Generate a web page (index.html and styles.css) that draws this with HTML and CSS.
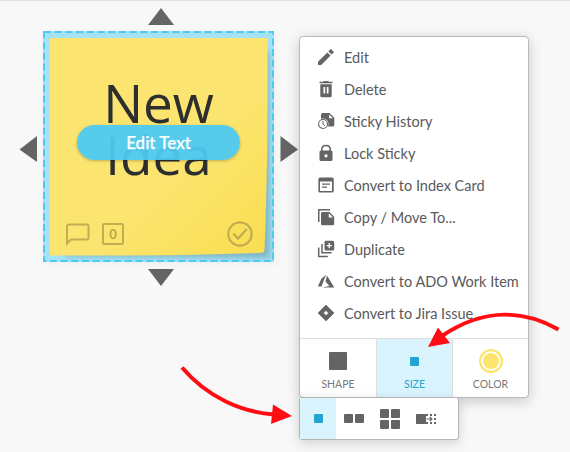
FILE: index.html
```html
<!DOCTYPE html>
<html lang="en">
<head>
<meta charset="utf-8">
<title>Sticky menu</title>
<link rel="stylesheet" href="styles.css">
</head>
<body>
<main class="canvas">
  <section class="sticky">
    <svg class="paper" width="231" height="231" viewBox="0 0 231 231">
      <defs>
        <linearGradient id="note" x1="0" y1="0" x2="1" y2="1">
          <stop offset="0.58" stop-color="#fbe570"/><stop offset="1" stop-color="#fadd4f"/>
        </linearGradient>
        <filter id="soft" x="-10%" y="-10%" width="120%" height="120%"><feGaussianBlur stdDeviation="3"/></filter>
        <clipPath id="frameClip"><rect width="231" height="231"/></clipPath>
      </defs>
      <rect width="231" height="231" fill="#a3e2f7"/>
      <path clip-path="url(#frameClip)" filter="url(#soft)" d="M20 20H226L227 227L22 225Z" fill="#4d7580" opacity=".42"/>
      <path d="M0 0H231V7H0ZM0 0H7V231H0Z" fill="#a3e2f7"/>
      <path d="M7 7H224.5C225 90 224 160 221.5 219Q221.500 221.500 219 221.800Q150 225 7 224.500Z" fill="url(#note)"/>
      <rect x="1" y="1" width="229" height="229" fill="none" stroke="#50c9ef" stroke-width="2" stroke-dasharray="7 3.700" stroke-dashoffset="0"/>
    </svg>
    <div class="note-text">New<br>Idea</div>
    <div class="edit-text">Edit Text</div>
    <div class="note-tools">
      <svg width="24" height="23" viewBox="0 0 24 23"><path d="M3.500 1.500H20.500Q22.500 1.500 22.500 3.500V14.500Q22.500 16.500 20.500 16.500H5L1 20.500V3.500Q1 1.500 3.500 1.500Z" fill="none" stroke="#c1ae50" stroke-width="2"/></svg>
      <span class="votes">0</span>
      <svg class="done" width="26" height="26" viewBox="0 0 26 26" fill="none" stroke="#c1ae50"><circle cx="13" cy="13" r="11.700" stroke-width="2.200"/><path d="M7 13.300L11 17.500L19.200 8.800" stroke-width="2.300" stroke-linecap="round"/></svg>
    </div>
  </section>
  <svg class="handles" width="300" height="300" viewBox="0 0 300 300" fill="#626466">
    <path d="M161 8L174 25H148ZM161 286L174 269H148ZM19.500 149.500L37 136V162ZM298 149.500L280.500 136V162Z"/>
  </svg>

  <nav class="menu">
    <ul class="items">
      <li><svg viewBox="0 0 16 16"><path d="M0 12.800V16H3.200L12.600 6.600L9.400 3.400ZM15.400 3.800Q16 3.100 15.400 2.500L13.500 .6Q12.900 0 12.200 .6L10.400 2.400L13.600 5.600Z"/></svg><span class="w1">Edit</span></li>
      <li><svg viewBox="0 0 16 16"><path d="M1.500 .8H5L6 0H10L11 .8H14.500V2.300H1.500ZM2.300 3.300H13.700V14.700Q13.700 16.300 12.200 16.300H3.800Q2.300 16.300 2.300 14.700ZM5.500 6V12.500H7.200V6ZM8.800 6V12.500H10.500V6Z" fill-rule="evenodd"/></svg><span class="w2">Delete</span></li>
      <li><svg viewBox="0 0 16 16"><path d="M3 1.500Q3 0 4.500 0H11.500L16.300 4.800V12Q16.300 13.500 14.800 13.500H6L3 8Z"/><path d="M11 1.500V5.300H15Z" fill="#fff"/><circle cx="5" cy="11" r="5.500" fill="#fff"/><circle cx="5" cy="11" r="4.500" fill="#fff" stroke="#626466" stroke-width="1.100"/><path d="M5 8V11.300L7 12.800" fill="none" stroke="#626466"/></svg><span class="w3">Sticky History</span></li>
      <li><svg viewBox="0 0 16 16"><path d="M3 5V4.500Q3 -.3 8 -.3T13 4.500V5.500Q14.500 5.500 14.500 7V14.500Q14.500 16 13 16H3Q1.500 16 1.500 14.500V7Q1.500 5.500 3 5.500ZM4.600 5.500H11.400V4.500Q11.400 1.300 8 1.300T4.600 4.500ZM8 9.200A1.600 1.600 0 1 0 8 12.400A1.600 1.600 0 1 0 8 9.200Z" fill-rule="evenodd"/></svg><span class="w4">Lock Sticky</span></li>
      <li><svg viewBox="0 0 16 16"><path d="M2 .5H14Q15.700 .5 15.700 2V14Q15.700 15.500 14 15.500H2Q.4 15.500 .4 14V2Q.4 .5 2 .5ZM2 4.500V14H14V4.500ZM4 6.500H12V7.800H4ZM4 9.500H9V10.800H4Z" fill-rule="evenodd"/></svg><span class="w5">Convert to Index Card</span></li>
      <li><svg viewBox="0 0 16 16"><path d="M0 0H12V1.500H1.500V13H0ZM3 4.500Q3 3 4.500 3H11.500L16.200 7.700V14.700Q16.200 16.200 14.700 16.200H4.500Q3 16.200 3 14.700ZM10.800 4.200V8.400H15Z" fill-rule="evenodd"/></svg><span class="w6">Copy / Move To...</span></li>
      <li><svg viewBox="0 0 16 16"><path d="M7.500 -.3H14.700Q16.200 -.3 16.200 1.200V8Q16.200 9.500 14.700 9.500H8Q6.500 9.500 6.500 8V1.200Q6.500 -.3 7.500 -.3ZM10.600 2V3.900H8.700V5.300H10.600V7.200H12V5.300H13.900V3.900H12V2Z" fill-rule="evenodd"/><path d="M4 3V11.700H13.500M.7 6.500V15.500H9.800" fill="none" stroke="#626466" stroke-width="1.500"/></svg><span class="w7">Duplicate</span></li>
      <li><svg viewBox="0 0 16 16"><path d="M8 1.700L3.400 5.700L-.2 13.500H3.500ZM9 2.500L16.300 14.500H4.200L11.400 13L7.500 8.500Z"/></svg><span class="w8">Convert to ADO Work Item</span></li>
      <li><svg viewBox="0 0 16 16"><path d="M8 0L16 8L8 16L0 8ZM8 5.400L5.400 8L8 10.600L10.600 8Z" fill-rule="evenodd" stroke="#626466" stroke-width=".6" stroke-linejoin="round"/></svg><span class="w9">Convert to Jira Issue</span></li>
    </ul>
    <div class="tabs">
      <div class="tab"><div class="pic"><i class="square big"></i></div><span>SHAPE</span></div>
      <div class="tab active"><div class="pic"><i class="square small"></i></div><span>SIZE</span></div>
      <div class="tab"><div class="pic"><i class="swatch"></i></div><span>COLOR</span></div>
    </div>
  </nav>
  <div class="sizes">
    <div class="size active"><i class="square small"></i></div>
    <div class="size"><i class="square small"></i><i class="square small"></i></div>
    <div class="size quad"><i class="square small"></i><i class="square small"></i><i class="square small"></i><i class="square small"></i></div>
    <div class="size"><svg width="20" height="10" viewBox="0 0 20 10"><rect width="10" height="10" rx=".7" fill="#626466"/><path d="M10 0h2v2h-2zM14 0h2v2h-2zM18 0h2v2h-2zM18 4h2v2h-2zM10 8h2v2h-2zM14 8h2v2h-2zM18 8h2v2h-2z" fill="#626466"/><path d="M10.500 5H16M13.800 3L16 5L13.800 7" stroke="#626466" stroke-width="1.100" fill="none"/></svg></div>
  </div>

  <svg class="arrows" width="570" height="452" viewBox="0 0 570 452">
    <path d="M182 367.500C208 398 242 412 274 414.500M558.500 329.500C520 308 480 310 442 336" fill="none" stroke="#fe0d13" stroke-width="4"/>
    <path d="M292 416L273 404.500L271 424ZM428 347L438 327.500L450 343Z" fill="#fe0d13"/>
  </svg>
</main>
</body>
</html>
```
FILE: styles.css
```css
* { box-sizing: border-box; }
body { margin: 0; background: #f8f8f8; }
.canvas {
  position: relative;
  width: 570px;
  height: 452px;
  overflow: hidden;
  border-top: 1px solid #e0e0e0;
  font-family: Lato, "Liberation Sans", sans-serif;
  color: #58595b;
}
.sticky {
  position: absolute;
  left: 43px;
  top: 30px;
  width: 231px;
  height: 231px;
  box-shadow: 2px 3px 8px rgba(0, 0, 0, .04);
}
.paper { position: absolute; left: 0; top: 0; }
.note-text {
  position: relative;
  padding-top: 46px;
  font: 53px/52px "Open Sans", sans-serif;
  color: #2d2e2e;
  text-align: center;
  height: 188px;
}
.edit-text {
  position: absolute;
  left: 34px;
  top: 94px;
  width: 163px;
  height: 35px;
  border-radius: 18px;
  background: rgba(77, 201, 242, .95);
  color: #fff;
  font-size: 17px;
  font-weight: 500;
  -webkit-text-stroke: .25px #fff;
  line-height: 35px;
  text-align: center;
  box-shadow: 0 1px 3px rgba(0, 0, 0, .25);
}
.note-tools {
  position: relative;
  display: flex;
  align-items: center;
  height: 30px;
  padding: 0 21px 0 23px;
}
.votes {
  width: 22px;
  height: 22px;
  margin-left: 12px;
  border: 2px solid #c1ae50;
  border-radius: 2px;
  color: #b8a64d;
  font-size: 13px;
  font-weight: 700;
  line-height: 18px;
  text-align: center;
}
.done { margin-left: auto; }
.handles, .arrows { position: absolute; left: 0; top: -1px; pointer-events: none; }

.menu {
  position: absolute;
  left: 299px;
  top: 35px;
  width: 230px;
  height: 362px;
  border: 1px solid #bababa;
  border-radius: 4px;
  background: #fff;
  box-shadow: 0 3px 14px rgba(0, 0, 0, .2);
  overflow: visible;
}
.items { list-style: none; margin: 0; padding: 4px 0 0; height: 301px; }
.items li {
  display: flex;
  align-items: center;
  gap: 10px;
  height: 32px;
  padding-left: 18px;
  font-size: 14.5px;
  white-space: nowrap;
}
.items svg { width: 16px; height: 16px; fill: #626466; overflow: visible; flex: none; }
.tabs { display: grid; grid-template-columns: 76px 77px 75px; height: 59px; border-top: 1px solid #ddd; }
.tab {
  display: flex;
  flex-direction: column;
  align-items: center;
  font-size: 10.500px;
  color: #77797b;
}
.tab.active { background: #daf4fe; color: #22a5d2; border: solid #ddd; border-width: 0 1px; }
.pic { height: 37px; padding-top: 7px; display: flex; align-items: center; }
.tab span { line-height: 17px; }
.square { display: block; background: #626466; border-radius: 1px; }
.big { width: 18px; height: 18px; }
.small { width: 9px; height: 9px; }
.active .small { background: #22a5d2; }
.swatch {
  width: 24px;
  height: 24px;
  border: 2px solid #fbe36c;
  border-radius: 50%;
  background: #fbe36c;
  box-shadow: inset 0 0 0 2px #fff;
}
.sizes {
  position: absolute;
  left: 299px;
  top: 396px;
  width: 160px;
  height: 43px;
  display: flex;
  border: 1px solid #b5b5b5;
  border-radius: 3px;
  background: #fff;
  box-shadow: 0 3px 12px rgba(0, 0, 0, .16);
}
.size { width: 36px; display: flex; align-items: center; justify-content: center; gap: 2px; }
.size.active { background: #daf4fe; }
.quad { display: grid; grid-template-columns: 9px 9px; align-content: center; }
```
